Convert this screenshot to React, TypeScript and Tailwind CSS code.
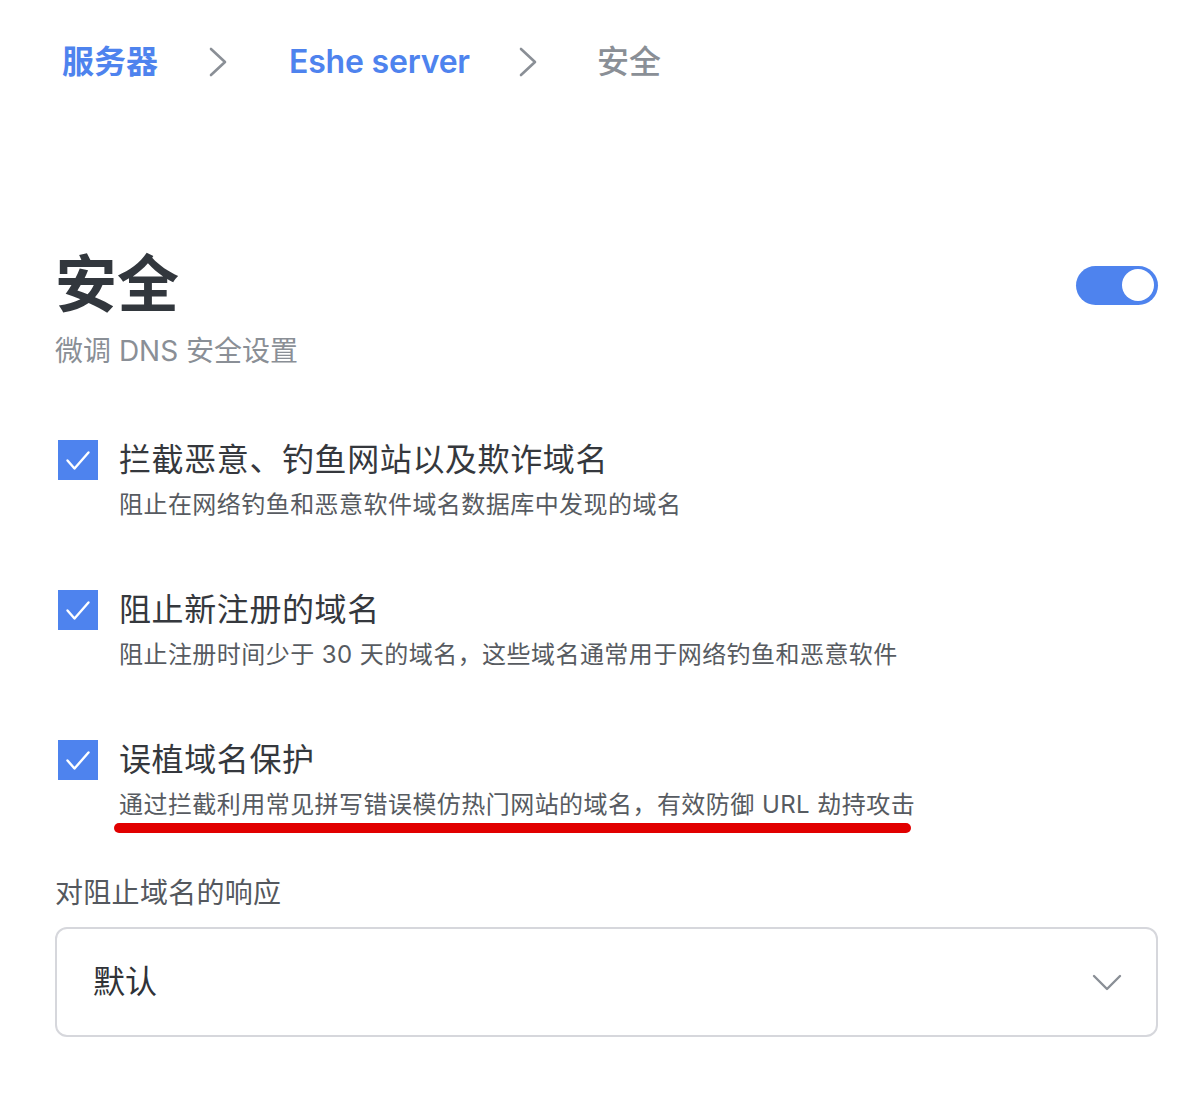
import React from "react";

const FONT = { fontFamily: 'Inter, "Noto Sans CJK SC", "Noto Sans", sans-serif' };

function Chevron() {
  return (
    <svg width="20" height="32" viewBox="0 0 20 32" className="shrink-0">
      <polyline points="3,3 17,16 3,29" fill="none" stroke="#8a8f96" strokeWidth="2.6" strokeLinecap="round" strokeLinejoin="round" />
    </svg>
  );
}

function Check() {
  return (
    <div className="w-[40px] h-[40px] bg-[#4e83ee] shrink-0">
      <svg width="40" height="40" viewBox="0 0 40 40">
        <polyline points="9.5,20.5 16.5,28.5 30.5,12.5" fill="none" stroke="#ffffff" strokeWidth="2.4" strokeLinecap="round" strokeLinejoin="round" />
      </svg>
    </div>
  );
}

function Item({ title, desc, underline, last }: { title: string; desc: string; underline?: boolean; last?: boolean }) {
  return (
    <div className={last ? "flex gap-[21px]" : "flex gap-[21px] h-[150px]"}>
      <div className="ml-[3px]">
        <Check />
      </div>
      <div className="flex flex-col">
        <div className="text-[32px] leading-[40px] tracking-[0.6px] text-[#35383d]">{title}</div>
        <div className="mt-[7px] text-[24px] leading-[36px] tracking-[0.45px] text-[#575b61]">{desc}</div>
        {underline && <div className="-ml-[5px] w-[797px] h-[10px] rounded-full bg-[#e10000]" />}
      </div>
    </div>
  );
}

export default function App() {
  return (
    <div className="w-[1192px] min-h-[1116px] bg-white pl-[55px] pr-[34px]" style={FONT}>
      <div className="h-[124px] flex items-center text-[32px] leading-none">
        <span className="text-[#4e83ee] font-semibold ml-[7px]">服务器</span>
        <span className="ml-[50px]"><Chevron /></span>
        <span className="ml-[61px] text-[#4e83ee] font-semibold tracking-[-0.2px]">Eshe server</span>
        <span className="ml-[48px]"><Chevron /></span>
        <span className="ml-[59px] text-[#8a8f96] font-medium">安全</span>
      </div>

      <div className="mt-[124px] flex items-center justify-between">
        <div className="text-[62px] leading-[74px] font-bold text-[#32373d]">安全</div>
        <div className="w-[82px] h-[39px] rounded-full bg-[#4e83ee] flex items-center justify-end pr-[4px]">
          <div className="w-[32px] h-[32px] rounded-full bg-white" />
        </div>
      </div>
      <div className="mt-[8px] text-[28px] leading-[42px] text-[#8a8f96]">微调 DNS 安全设置</div>

      <div className="mt-[68px] flex flex-col">
        <Item title="拦截恶意、钓鱼网站以及欺诈域名" desc="阻止在网络钓鱼和恶意软件域名数据库中发现的域名" />
        <Item title="阻止新注册的域名" desc="阻止注册时间少于 30 天的域名，这些域名通常用于网络钓鱼和恶意软件" />
        <Item title="误植域名保护" desc="通过拦截利用常见拼写错误模仿热门网站的域名，有效防御 URL 劫持攻击" underline last />
      </div>

      <div className="mt-[39px] text-[28px] leading-[42px] tracking-[0.3px] text-[#54585e]">对阻止域名的响应</div>
      <div className="mt-[13px] h-[110px] rounded-[12px] border-2 border-[#d6d7dc] flex items-center justify-between pl-[36px] pr-[34px]">
        <span className="text-[32px] leading-none text-[#303338]">默认</span>
        <svg width="30" height="18" viewBox="0 0 30 18">
          <polyline points="2,3 15,16 28,3" fill="none" stroke="#8a8f96" strokeWidth="2.4" strokeLinecap="round" strokeLinejoin="round" />
        </svg>
      </div>
    </div>
  );
}
